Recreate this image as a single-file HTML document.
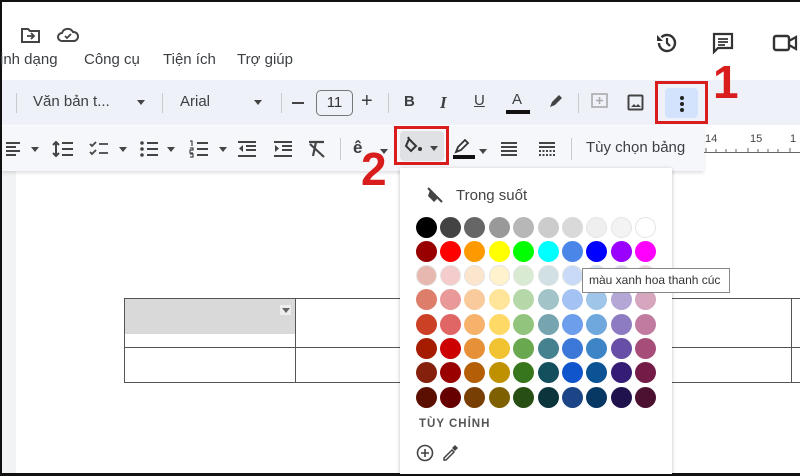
<!DOCTYPE html>
<html><head><meta charset="utf-8"><style>
*{margin:0;padding:0;box-sizing:border-box}
body{width:800px;height:476px;overflow:hidden;background:#fff;font-family:"Liberation Sans",Arial,sans-serif;position:relative;color:#444}
.a{position:absolute}
.t{position:absolute;font-size:15px;color:#3c4043;white-space:nowrap}
.c{position:absolute;width:21px;height:21px;border-radius:50%}
.dd{position:absolute;width:0;height:0;border-left:4px solid transparent;border-right:4px solid transparent;border-top:5px solid #444}
.ln{position:absolute;height:2px;background:#444}
</style></head><body>
<!-- outer border -->
<div class="a" style="left:0;top:0;width:800px;height:2px;background:#111"></div>
<div class="a" style="left:0;top:0;width:2px;height:476px;background:#111"></div>
<div class="a" style="left:0;top:473px;width:800px;height:3px;background:#111"></div>
<!-- left margin -->
<div class="a" style="left:2px;top:170px;width:14px;height:303px;background:#f1f3f4"></div>
<!-- top icons -->
<svg class="a" style="left:20px;top:26px" width="22" height="18" viewBox="0 0 22 18"><path d="M2 3h6l2 2h9v11H2z" fill="none" stroke="#444" stroke-width="2"/><path d="M7 10h7M11 7l3 3-3 3" fill="none" stroke="#444" stroke-width="1.8"/></svg>
<svg class="a" style="left:56px;top:27px" width="24" height="16" viewBox="0 0 24 16"><path d="M6 14a4 4 0 0 1 0-8 6 6 0 0 1 11-1 4.5 4.5 0 0 1 1 9z" fill="none" stroke="#444" stroke-width="2"/><path d="M9 9l2 2 4-4" fill="none" stroke="#444" stroke-width="1.8"/></svg>
<div class="t" style="left:0;top:51px">ịnh dạng</div>
<div class="t" style="left:84px;top:51px">Công cụ</div>
<div class="t" style="left:163px;top:51px">Tiện ích</div>
<div class="t" style="left:237px;top:51px">Trợ giúp</div>
<svg class="a" style="left:655px;top:31px" width="24" height="24" viewBox="0 0 24 24"><path d="M4 12a8 8 0 1 0 2.5-5.8" fill="none" stroke="#333" stroke-width="2.4"/><path d="M2 4v6h6" fill="#333"/><path d="M12 7v5l3 3" fill="none" stroke="#333" stroke-width="2.2"/></svg>
<svg class="a" style="left:711px;top:31px" width="24" height="24" viewBox="0 0 24 24"><path d="M3 3h18v14H7l-4 4z" fill="none" stroke="#333" stroke-width="2.2"/><path d="M7 8h10M7 11h10M7 14h7" stroke="#333" stroke-width="1.8"/></svg>
<svg class="a" style="left:772px;top:33px" width="28" height="20" viewBox="0 0 28 20"><rect x="2" y="3" width="15" height="14" rx="2" fill="none" stroke="#333" stroke-width="2.4"/><path d="M17 8l7-4v12l-7-4" fill="none" stroke="#333" stroke-width="2.2"/></svg>
<!-- toolbar row 1 -->
<div class="a" style="left:2px;top:80px;width:798px;height:45px;background:#eef2f8"></div>
<div class="a" style="left:16px;top:93px;width:1px;height:20px;background:#c8cbd0"></div>
<div class="t" style="left:33px;top:93px">Văn bản t...</div>
<div class="dd" style="left:137px;top:100px"></div>
<div class="a" style="left:162px;top:93px;width:1px;height:20px;background:#c8cbd0"></div>
<div class="t" style="left:180px;top:93px">Arial</div>
<div class="dd" style="left:254px;top:100px"></div>
<div class="a" style="left:281px;top:93px;width:1px;height:20px;background:#c8cbd0"></div>
<div class="a" style="left:292px;top:102px;width:12px;height:2px;background:#444"></div>
<div class="a" style="left:316px;top:90px;width:37px;height:26px;border:1px solid #777;border-radius:5px;font-size:15px;text-align:center;line-height:24px;color:#333">11</div>
<div class="t" style="left:361px;top:90px;font-size:20px">+</div>
<div class="a" style="left:388px;top:93px;width:1px;height:20px;background:#c8cbd0"></div>
<div class="t" style="left:404px;top:93px;font-weight:bold">B</div>
<div class="t" style="left:440px;top:93px;font-style:italic;font-weight:bold;font-family:'Liberation Serif',serif;font-size:17px">I</div>
<div class="t" style="left:474px;top:92px;text-decoration:underline">U</div>
<div class="t" style="left:512px;top:91px">A</div>
<div class="a" style="left:506px;top:110px;width:24px;height:4px;background:#111"></div>
<svg class="a" style="left:547px;top:92px" width="18" height="18" viewBox="0 0 18 18"><path d="M3 15l2-5 7-7 3 3-7 7z" fill="#444"/></svg>
<div class="a" style="left:578px;top:93px;width:1px;height:20px;background:#c8cbd0"></div>
<svg class="a" style="left:591px;top:93px" width="18" height="18" viewBox="0 0 18 18"><rect x="1" y="1" width="15" height="13" fill="none" stroke="#aaa" stroke-width="1.6"/><path d="M8.5 4v7M5 7.5h7" stroke="#aaa" stroke-width="1.5"/></svg>
<svg class="a" style="left:627px;top:94px" width="18" height="18" viewBox="0 0 18 18"><rect x="1.5" y="1.5" width="14" height="14" rx="1" fill="none" stroke="#444" stroke-width="2"/><path d="M4 13l3-3 2 2 2-2 3 3z" fill="#444"/></svg>
<div class="a" style="left:656px;top:93px;width:1px;height:20px;background:#c8cbd0"></div>
<div class="a" style="left:665px;top:88px;width:33px;height:30px;background:#d3e3fd;border-radius:4px"></div>
<div class="a" style="left:680px;top:96px;width:4px;height:4px;border-radius:2px;background:#222;box-shadow:0 6px 0 #222,0 12px 0 #222"></div>
<div class="a" style="left:655px;top:81px;width:53px;height:43px;border:3px solid #d91c1c"></div>
<div class="a" style="left:713px;top:55px;font-size:46px;font-weight:bold;color:#d91c1c;font-family:'Liberation Sans',sans-serif">1</div>
<!-- toolbar row 2 -->
<div class="a" style="left:2px;top:126px;width:702px;height:45px;background:#f5f7fa;box-shadow:0 2px 3px rgba(0,0,0,.12)"></div>
<svg class="a" style="left:4px;top:140px" width="40" height="18" viewBox="0 0 40 18"><path d="M2 3h14M2 7h10M2 11h14M2 15h10" stroke="#444" stroke-width="2"/><path d="M27 7l4 5 4-5z" fill="#444"/></svg>
<svg class="a" style="left:52px;top:140px" width="24" height="18" viewBox="0 0 24 18"><path d="M4 2v14M1 5l3-3 3 3M1 13l3 3 3-3M10 3h11M10 9h11M10 15h11" fill="none" stroke="#444" stroke-width="2"/></svg>
<svg class="a" style="left:89px;top:140px" width="42" height="18" viewBox="0 0 42 18"><path d="M1 4l2 2 4-4M1 12l2 2 4-4M10 4h9M10 13h9" fill="none" stroke="#444" stroke-width="1.8"/><path d="M30 7l4 5 4-5z" fill="#444"/></svg>
<svg class="a" style="left:139px;top:140px" width="42" height="18" viewBox="0 0 42 18"><circle cx="3" cy="3" r="1.8" fill="#444"/><circle cx="3" cy="9" r="1.8" fill="#444"/><circle cx="3" cy="15" r="1.8" fill="#444"/><path d="M8 3h11M8 9h11M8 15h11" stroke="#444" stroke-width="2"/><path d="M28 7l4 5 4-5z" fill="#444"/></svg>
<svg class="a" style="left:189px;top:140px" width="42" height="18" viewBox="0 0 42 18"><path d="M1 1h2v5M1 8h3v2H1v3h3M1 14h3v3H1" fill="none" stroke="#444" stroke-width="1.2"/><path d="M8 3h11M8 9h11M8 15h11" stroke="#444" stroke-width="2"/><path d="M30 7l4 5 4-5z" fill="#444"/></svg>
<svg class="a" style="left:237px;top:140px" width="20" height="18" viewBox="0 0 20 18"><path d="M1 2h18M9 6h10M9 10h10M1 16h18" stroke="#444" stroke-width="2"/><path d="M6 5l-4 3.5 4 3.5z" fill="#444"/></svg>
<svg class="a" style="left:273px;top:140px" width="20" height="18" viewBox="0 0 20 18"><path d="M1 2h18M9 6h10M9 10h10M1 16h18" stroke="#444" stroke-width="2"/><path d="M2 5l4 3.5-4 3.5z" fill="#444"/></svg>
<svg class="a" style="left:307px;top:140px" width="20" height="18" viewBox="0 0 20 18"><path d="M2 2h15M9 2l-3 14M3 4l14 13" stroke="#444" stroke-width="2.2"/></svg>
<div class="a" style="left:340px;top:138px;width:1px;height:22px;background:#c8cbd0"></div>
<div class="t" style="left:353px;top:138px;font-weight:bold;font-size:17px">ê</div>
<div class="dd" style="left:380px;top:149px"></div>
<div class="a" style="left:400px;top:131px;width:44px;height:30px;background:#dfe1e5;border-radius:4px"></div>
<svg class="a" style="left:405px;top:136px" width="36" height="20" viewBox="0 0 36 20"><path d="M4 3l7 7-5 5-5-5z M4 3l-1-2" fill="none" stroke="#333" stroke-width="2"/><circle cx="15" cy="13" r="2" fill="#333"/><path d="M25 10l4 5 4-5z" fill="#444"/></svg>
<div class="a" style="left:394px;top:126px;width:55px;height:39px;border:3px solid #d91c1c"></div>
<div class="a" style="left:361px;top:146px;font-size:46px;font-weight:bold;color:#d91c1c;line-height:46px">2</div>
<svg class="a" style="left:453px;top:138px" width="36" height="22" viewBox="0 0 36 22"><path d="M3 14l2-5 7-7 3 3-7 7z" fill="none" stroke="#333" stroke-width="1.8"/><rect x="0" y="17" width="22" height="4" fill="#111"/><path d="M26 11l4 5 4-5z" fill="#444"/></svg>
<svg class="a" style="left:500px;top:141px" width="18" height="16" viewBox="0 0 18 16"><path d="M1 2h16M1 6h16M1 10h16M1 14h16" stroke="#444" stroke-width="2"/></svg>
<svg class="a" style="left:538px;top:141px" width="18" height="16" viewBox="0 0 18 16"><path d="M1 2h16M1 6h16" stroke="#444" stroke-width="2"/><path d="M1 10h16M1 14h16" stroke="#444" stroke-width="2" stroke-dasharray="2 1.5"/></svg>
<div class="a" style="left:571px;top:138px;width:1px;height:22px;background:#c8cbd0"></div>
<div class="t" style="left:586px;top:139px;font-size:15px">Tùy chọn bảng</div>
<!-- ruler -->
<div class="a" style="left:705px;top:133px;font-size:11px;color:#444">14</div>
<div class="a" style="left:750px;top:133px;font-size:11px;color:#444">15</div>
<div class="a" style="left:790px;top:133px;font-size:11px;color:#444">1</div>
<div class="a" style="left:704px;top:152px;width:96px;height:1px;background:#666"></div>
<svg class="a" style="left:704px;top:146px" width="96" height="6"><path d="M2 2v4M12 3v3M22 3v3M32 3v3M44 2v4M54 3v3M64 3v3M74 3v3M86 2v4" stroke="#666"/></svg>
<!-- table -->
<div class="a" style="left:124px;top:299px;width:171px;height:35px;background:#d9d9d9"></div>
<div class="a" style="left:280px;top:305px;width:11px;height:10px;background:#eee"></div>
<div class="dd" style="left:282px;top:308px;border-top-color:#666"></div>
<div class="a" style="left:124px;top:298px;width:676px;height:1px;background:#555"></div>
<div class="a" style="left:124px;top:347px;width:676px;height:1px;background:#555"></div>
<div class="a" style="left:124px;top:382px;width:676px;height:1px;background:#555"></div>
<div class="a" style="left:124px;top:298px;width:1px;height:85px;background:#555"></div>
<div class="a" style="left:295px;top:298px;width:1px;height:85px;background:#555"></div>
<div class="a" style="left:791px;top:298px;width:1px;height:85px;background:#555"></div>
<!-- popup -->
<div class="a" style="left:400px;top:168px;width:272px;height:306px;background:#fff;box-shadow:0 1px 4px rgba(0,0,0,.25)"></div>
<svg class="a" style="left:426px;top:186px" width="18" height="18" viewBox="0 0 18 18"><path d="M4 4l8 8-4 4-6-6z" fill="#444"/><path d="M2 2l14 14" stroke="#444" stroke-width="2"/></svg>
<div class="t" style="left:456px;top:187px;font-size:15px;color:#444">Trong suốt</div>
<div id="g"></div>
<div class="a" style="left:419px;top:418px;font-size:11.5px;font-weight:bold;letter-spacing:1px;color:#555">TÙY CHỈNH</div>
<svg class="a" style="left:416px;top:444px" width="18" height="18" viewBox="0 0 18 18"><circle cx="9" cy="9" r="7.5" fill="none" stroke="#444" stroke-width="1.6"/><path d="M9 5v8M5 9h8" stroke="#444" stroke-width="1.6"/></svg>
<svg class="a" style="left:441px;top:443px" width="18" height="18" viewBox="0 0 18 18"><path d="M3 15l8-8 2 2-8 8H3z" fill="none" stroke="#444" stroke-width="1.5"/><path d="M11 5l3-3 3 3-3 3z" fill="#444"/></svg>
<script>
var cols=[["#000","#434343","#666","#999","#b7b7b7","#ccc","#d9d9d9","#efefef","#f3f3f3","#fff"],
["#980000","#f00","#f90","#ff0","#0f0","#0ff","#4a86e8","#00f","#90f","#f0f"],
["#e6b8af","#f4cccc","#fce5cd","#fff2cc","#d9ead3","#d0e0e3","#c9daf8","#cfe2f3","#d9d2e9","#ead1dc"],
["#dd7e6b","#ea9999","#f9cb9c","#ffe599","#b6d7a8","#a2c4c9","#a4c2f4","#9fc5e8","#b4a7d6","#d5a6bd"],
["#cc4125","#e06666","#f6b26b","#ffd966","#93c47d","#76a5af","#6d9eeb","#6fa8dc","#8e7cc3","#c27ba0"],
["#a61c00","#c00","#e69138","#f1c232","#6aa84f","#45818e","#3c78d8","#3d85c6","#674ea7","#a64d79"],
["#85200c","#900","#b45f06","#bf9000","#38761d","#134f5c","#1155cc","#0b5394","#351c75","#741b47"],
["#5b0f00","#600","#783f04","#7f6000","#274e13","#0c343d","#1c4587","#073763","#20124d","#4c1130"]];
var h="";for(var j=0;j<8;j++)for(var i=0;i<10;i++){var x=426+i*24.4-10.5,y=227+j*24.3-10.5;var b=(j==0&&i>=7)||(j==2)?"border:1px solid #e4e4e4;":"";h+='<div class="c" style="left:'+x+'px;top:'+y+'px;background:'+cols[j][i]+';'+b+'"></div>';}
document.getElementById("g").innerHTML=h;
</script>
<div class="a" style="left:582px;top:268px;width:148px;height:25px;background:#fff;border:1px solid #888;font-size:12px;color:#333;line-height:23px;padding-left:6px;white-space:nowrap">màu xanh hoa thanh cúc</div>
</body></html>
